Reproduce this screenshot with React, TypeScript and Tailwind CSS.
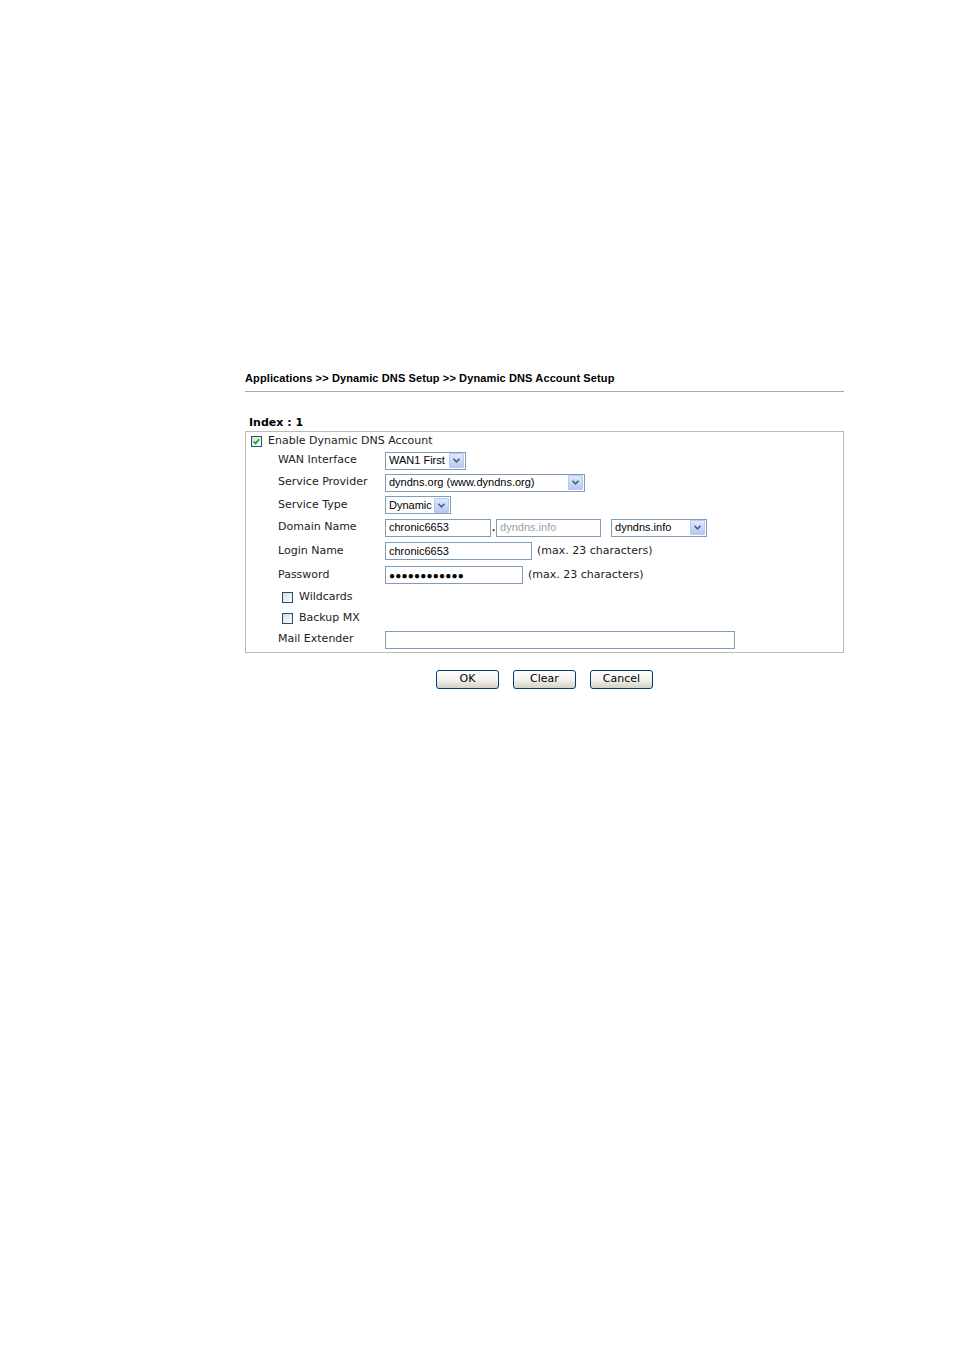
import React from "react";

const lab = "font-['DejaVu_Sans',Verdana,sans-serif] text-[11px] text-[#222] whitespace-nowrap";
const inpF = "font-['Liberation_Sans',Arial,sans-serif] text-[11px]";

function Arrow() {
  return (
    <span className="ml-auto flex h-[15px] w-[15px] items-center justify-center rounded-[1px] border border-[#b9c9ef] bg-gradient-to-b from-[#dfe8fd] to-[#b7c9f3]">
      <svg width="7" height="5" viewBox="0 0 7 5">
        <path d="M0.5 0.8 L3.5 3.8 L6.5 0.8" fill="none" stroke="#4d6185" strokeWidth="1.6" />
      </svg>
    </span>
  );
}

function Select({ w, text }: { w: string; text: string }) {
  return (
    <div className={`flex h-[18px] items-center border border-[#7f9db9] bg-white pl-[3px] pr-[1px] text-black ${w} ${inpF}`}>
      <span className="whitespace-nowrap">{text}</span>
      <Arrow />
    </div>
  );
}

function Input({ w, text, gray, pw }: { w: string; text?: string; gray?: boolean; pw?: boolean }) {
  return (
    <div className={`flex h-[18px] items-center border border-[#7f9db9] bg-white pl-[3px] ${w} ${inpF} ${gray ? "text-[#a0a0a0]" : "text-black"}`}>
      {pw ? <span className="text-[10px] tracking-[0.2px]">●●●●●●●●●●●●</span> : text}
    </div>
  );
}

function Check({ checked }: { checked?: boolean }) {
  return (
    <span className="flex h-[11px] w-[11px] items-center justify-center border border-[#1c5180] bg-gradient-to-br from-[#dcdcd6] to-[#fdfdfb]">
      {checked && (
        <svg width="7" height="7" viewBox="0 0 7 7">
          <path d="M0.7 3.4 L2.6 5.4 L6.3 1.2" fill="none" stroke="#21a121" strokeWidth="1.7" />
        </svg>
      )}
    </span>
  );
}

function Row({ h, label, children }: { h: string; label: string; children?: React.ReactNode }) {
  return (
    <div className={`flex items-center ${h}`}>
      <div className={`w-[139px] shrink-0 pl-[32px] ${lab}`}>{label}</div>
      <div className="flex items-center">{children}</div>
    </div>
  );
}

function Btn({ t }: { t: string }) {
  return (
    <button className="flex h-[19px] w-[63px] items-center justify-center rounded-[3px] border border-[#003c74] bg-gradient-to-b from-[#ffffff] via-[#f3f3ef] to-[#d6d0c5] font-['DejaVu_Sans',Verdana,sans-serif] text-[11px] text-black">
      {t}
    </button>
  );
}

export default function App() {
  return (
    <div className="min-h-[1351px] w-[954px] bg-white">
      <div className="h-[370px]" />
      <div className="ml-[245px] w-[599px]">
        <div className="flex h-[16px] items-center whitespace-nowrap font-['Liberation_Sans',Arial,sans-serif] text-[11px] font-bold tracking-[0.12px] text-black">
          Applications &gt;&gt; Dynamic DNS Setup &gt;&gt; Dynamic DNS Account Setup
        </div>
        <div className="mt-[5px] h-px bg-[#a8a89e]" />
        <div className="mt-[24px] flex h-[14px] items-center pl-[4px] font-['DejaVu_Sans',Verdana,sans-serif] text-[11px] font-bold text-black">
          Index : 1
        </div>
        <div className="mt-[1px] border border-[#c0bca6] pb-[2px]">
          <div className="flex h-[18px] items-center pl-[5px]">
            <Check checked />
            <span className={`ml-[6px] ${lab}`}>Enable Dynamic DNS Account</span>
          </div>
          <Row h="h-[21px]" label="WAN Interface">
            <Select w="w-[81px]" text="WAN1 First" />
          </Row>
          <Row h="h-[23px]" label="Service Provider">
            <Select w="w-[200px]" text="dyndns.org (www.dyndns.org)" />
          </Row>
          <Row h="h-[22px]" label="Service Type">
            <Select w="w-[66px]" text="Dynamic" />
          </Row>
          <Row h="h-[23px]" label="Domain Name">
            <Input w="w-[106px]" text="chronic6653" />
            <span className={`mx-[1px] self-end pb-[1px] ${inpF} font-bold text-black`}>.</span>
            <Input w="w-[105px]" text="dyndns.info" gray />
            <div className="w-[10px]" />
            <Select w="w-[96px]" text="dyndns.info" />
          </Row>
          <Row h="h-[24px]" label="Login Name">
            <Input w="w-[147px]" text="chronic6653" />
            <span className={`ml-[5px] ${lab}`}>(max. 23 characters)</span>
          </Row>
          <Row h="h-[24px]" label="Password">
            <Input w="w-[138px]" pw />
            <span className={`ml-[5px] ${lab}`}>(max. 23 characters)</span>
          </Row>
          <div className="flex h-[21px] items-center pl-[36px]">
            <Check />
            <span className={`ml-[6px] ${lab}`}>Wildcards</span>
          </div>
          <div className="flex h-[21px] items-center pl-[36px]">
            <Check />
            <span className={`ml-[6px] ${lab}`}>Backup MX</span>
          </div>
          <Row h="h-[21px]" label="Mail Extender">
            <Input w="w-[350px]" />
          </Row>
        </div>
        <div className="mt-[17px] flex gap-[14px] pl-[191px]">
          <Btn t="OK" />
          <Btn t="Clear" />
          <Btn t="Cancel" />
        </div>
      </div>
    </div>
  );
}
